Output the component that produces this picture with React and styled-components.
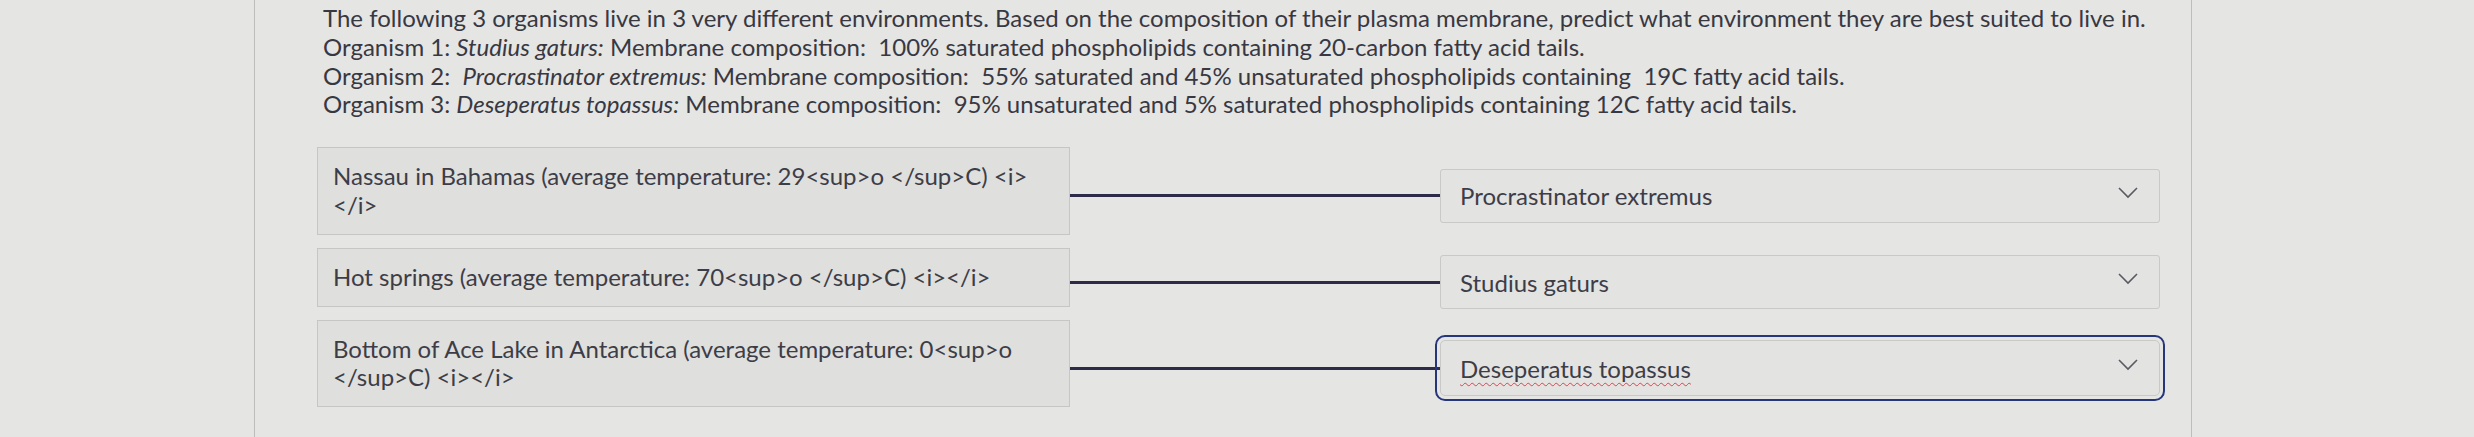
import React from "react";
import styled, { createGlobalStyle } from "styled-components";

const Global = createGlobalStyle`
  html, body { margin: 0; padding: 0; background: #e5e5e3; }
  body { font-family: Lato, "Open Sans", Arial, sans-serif; color: #3a3a44; }
`;

const Page = styled.div`
  height: 437px;
  overflow: hidden;
  padding-left: 254px;
  box-sizing: border-box;
`;

const Panel = styled.div`
  width: 1938px;
  height: 437px;
  box-sizing: border-box;
  border-left: 1px solid #bdbdbc;
  border-right: 1px solid #bdbdbc;
  padding: 4px 0 0 62px;
`;

const Question = styled.div`
  font-size: 24px;
  line-height: 28.8px;
  padding-left: 6px;
  color: #383842;
  em { font-style: italic; }
`;

const Matches = styled.div`
  display: grid;
  grid-template-columns: 753px 1090px;
  row-gap: 13px;
  margin-top: 28px;
`;

const Prompt = styled.div`
  box-sizing: border-box;
  background: #dfdfdd;
  border: 1px solid #c6c6c5;
  padding: 14px 15px;
  font-size: 24px;
  line-height: 28.8px;
  color: #3d3d47;
`;

const Answer = styled.div`
  display: flex;
  align-items: center;
  align-self: center;
  margin-top: 5px;
  margin-bottom: -5px;
`;

const Connector = styled.div`
  width: 370px;
  height: 3px;
  background: #2e2b4a;
  flex: none;
`;

const Select = styled.div`
  box-sizing: border-box;
  width: 720px;
  height: ${(p) => (p.$focused ? "56px" : "54px")};
  display: flex;
  align-items: center;
  justify-content: space-between;
  padding: 0 20px 0 19px;
  background: #e3e3e1;
  border: 1px solid #c9c9c8;
  border-radius: ${(p) => (p.$focused ? "5px" : "3px")};
  font-size: 24px;
  color: #3d3d47;
  outline: ${(p) => (p.$focused ? "2.5px solid #27357a" : "none")};
  outline-offset: 3px;
`;

const Value = styled.span`
  ${(p) =>
    p.$misspelled
      ? `text-decoration: underline wavy #d9434f; text-decoration-thickness: 1px; text-underline-offset: 4px;`
      : ""}
`;

const ChevronSvg = styled.svg`
  margin-top: -6px;
  flex: none;
`;

const Chevron = () => (
  <ChevronSvg width="22" height="14" viewBox="0 0 22 14">
    <path d="M2 2 L11 11 L20 2" fill="none" stroke="#5a5a64" strokeWidth="1.6" />
  </ChevronSvg>
);

const rows = [
  {
    prompt: "Nassau in Bahamas (average temperature: 29<sup>o </sup>C) <i>\n</i>",
    answer: "Procrastinator extremus",
  },
  {
    prompt: "Hot springs (average temperature: 70<sup>o </sup>C) <i></i>",
    answer: "Studius gaturs",
  },
  {
    prompt: "Bottom of Ace Lake in Antarctica (average temperature: 0<sup>o\n</sup>C) <i></i>",
    answer: "Deseperatus topassus",
    focused: true,
  },
];

const Line = styled.span`
  display: block;
`;

export default function App() {
  return (
    <>
      <Global />
      <Page>
        <Panel>
          <Question>
            <Line>
              The following 3 organisms live in 3 very different environments. Based on the composition of their plasma membrane, predict what environment they are best suited to live in.
            </Line>
            <Line>
              Organism 1: <em>Studius gaturs:</em> Membrane composition:&nbsp; 100% saturated phospholipids containing 20-carbon fatty acid tails.
            </Line>
            <Line>
              Organism 2:&nbsp; <em>Procrastinator extremus:</em> Membrane composition:&nbsp; 55% saturated and 45% unsaturated phospholipids containing&nbsp; 19C fatty acid tails.
            </Line>
            <Line>
              Organism 3: <em>Deseperatus topassus:</em> Membrane composition:&nbsp; 95% unsaturated and 5% saturated phospholipids containing 12C fatty acid tails.
            </Line>
          </Question>
          <Matches>
            {rows.map((r, i) => (
              <React.Fragment key={i}>
                <Prompt>
                  {r.prompt.split("\n").map((t, j) => (
                    <Line key={j}>{t}</Line>
                  ))}
                </Prompt>
                <Answer>
                  <Connector />
                  <Select $focused={r.focused}>
                    <Value $misspelled={r.focused}>{r.answer}</Value>
                    <Chevron />
                  </Select>
                </Answer>
              </React.Fragment>
            ))}
          </Matches>
        </Panel>
      </Page>
    </>
  );
}
